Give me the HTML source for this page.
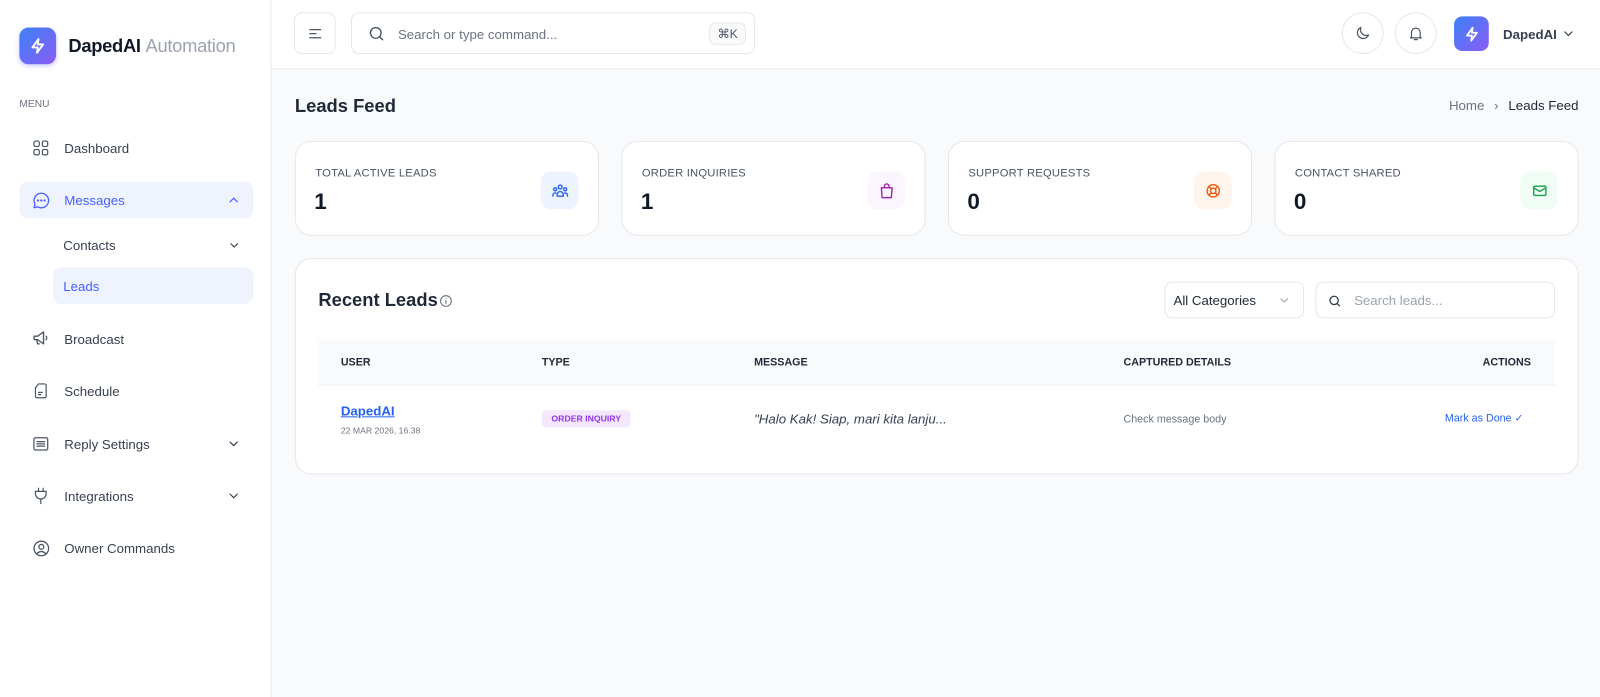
<!DOCTYPE html>
<html><head><meta charset="utf-8"><style>
*{box-sizing:border-box;margin:0;padding:0}
html,body{width:1600px;height:697px;overflow:hidden;background:#f9fafb}
body{font-family:"Liberation Sans",sans-serif;color:#1f2937;position:relative}
#w{position:absolute;left:0;top:0;width:1568px;height:683px;transform:scale(1.020408);transform-origin:0 0}
.a{position:absolute}
.side{left:0;top:0;width:266px;height:700px;background:#fff;border-right:1px solid #e5e7eb}
.hdr{left:266px;top:0;width:1334px;height:68px;background:#fff;border-bottom:1px solid #e5e7eb}
.nav{position:absolute;left:19px;width:229px;height:36px;border-radius:8px;display:flex;align-items:center;font-size:13px;color:#374151}
.nav svg.i{position:absolute;left:12px}
.nav span{position:absolute;left:44px}
.nav .ch{position:absolute;right:12px}
.card{position:absolute;top:138px;width:298px;height:93px;background:#fff;border:1px solid #e5e7eb;border-radius:16px}
.card .l{position:absolute;left:19px;top:25px;font-size:11px;color:#4b5563;letter-spacing:.2px}
.card .n{position:absolute;left:18px;top:46px;font-size:22px;font-weight:bold;color:#111827}
.card .ic{position:absolute;right:19px;top:29px;width:37px;height:37px;border-radius:10px;display:flex;align-items:center;justify-content:center}
svg{fill:none;stroke-linecap:round;stroke-linejoin:round}
.th{position:absolute;top:349px;font-size:10.5px;font-weight:bold;color:#1f2937}
</style></head><body><div id="w">
<div class="a side">
  <div class="a" style="left:19px;top:27px;width:36px;height:36px;border-radius:9px;background:linear-gradient(135deg,#3b82f6,#8b5cf6);box-shadow:0 2px 4px rgba(99,102,241,.3);display:flex;align-items:center;justify-content:center">
    <svg width="18" height="18" viewBox="0 0 24 24" stroke="#fff" stroke-width="2.5"><path d="M13 3L5 14h7l-1 7 8-11h-7z"/></svg></div>
  <div class="a" style="left:67px;top:35px;font-size:18px;font-weight:bold;color:#111827;letter-spacing:-.3px">DapedAI <span style="font-weight:normal;color:#9ca3af">Automation</span></div>
  <div class="a" style="left:19px;top:97px;font-size:10px;color:#6b7280">MENU</div>
  <div class="nav" style="top:127px"><svg class="i" width="18" height="18" viewBox="0 0 24 24" stroke="#4b5563" stroke-width="1.6"><rect x="3" y="3" width="7" height="7" rx="2"/><rect x="14" y="3" width="7" height="7" rx="2"/><rect x="3" y="14" width="7" height="7" rx="2"/><rect x="14" y="14" width="7" height="7" rx="2"/></svg><span>Dashboard</span></div>
  <div class="nav" style="top:178px;background:#eef3fd;color:#465fff"><svg class="i" width="19" height="19" viewBox="0 0 24 24" stroke="#465fff" stroke-width="1.6"><path d="M12 3a9 9 0 00-7.8 13.5L3 21l4.5-1.2A9 9 0 1012 3z"/><circle cx="8" cy="12" r=".6" fill="#465fff"/><circle cx="12" cy="12" r=".6" fill="#465fff"/><circle cx="16" cy="12" r=".6" fill="#465fff"/></svg><span>Messages</span><svg class="ch" width="14" height="14" viewBox="0 0 24 24" stroke="#465fff" stroke-width="2"><path d="M6 15l6-6 6 6"/></svg></div>
  <div class="nav" style="top:222px"><span style="left:43px">Contacts</span><svg class="ch" width="13" height="13" viewBox="0 0 24 24" stroke="#374151" stroke-width="2"><path d="M6 9l6 6 6-6"/></svg></div>
  <div class="nav" style="top:262px;left:52px;width:196px;background:#eef3fd;color:#465fff"><span style="left:10px">Leads</span></div>
  <div class="nav" style="top:314px"><svg class="i" width="20" height="20" viewBox="0 0 24 24" stroke="#4b5563" stroke-width="1.6"><path d="M3 9v4h4l7 5V4L7 9z"/><path d="M17 9a3 3 0 010 4"/><path d="M6 13l1 5h2"/></svg><span>Broadcast</span></div>
  <div class="nav" style="top:365px"><svg class="i" width="18" height="18" viewBox="0 0 24 24" stroke="#4b5563" stroke-width="1.6"><path d="M9 3h8a2 2 0 012 2v14a2 2 0 01-2 2H7a2 2 0 01-2-2V8z"/><path d="M9 14h5M9 17h3"/></svg><span>Schedule</span></div>
  <div class="nav" style="top:417px"><svg class="i" width="18" height="18" viewBox="0 0 24 24" stroke="#4b5563" stroke-width="1.6"><rect x="3" y="4" width="18" height="16" rx="2"/><path d="M7 9h10M7 12h10M7 15h10"/></svg><span>Reply Settings</span><svg class="ch" width="14" height="14" viewBox="0 0 24 24" stroke="#374151" stroke-width="2"><path d="M6 9l6 6 6-6"/></svg></div>
  <div class="nav" style="top:468px"><svg class="i" width="18" height="18" viewBox="0 0 24 24" stroke="#4b5563" stroke-width="1.6"><path d="M9 2v4M15 2v4M5 6h14v3a7 7 0 01-14 0z"/><path d="M12 16v6"/></svg><span>Integrations</span><svg class="ch" width="14" height="14" viewBox="0 0 24 24" stroke="#374151" stroke-width="2"><path d="M6 9l6 6 6-6"/></svg></div>
  <div class="nav" style="top:519px"><svg class="i" width="19" height="19" viewBox="0 0 24 24" stroke="#4b5563" stroke-width="1.6"><circle cx="12" cy="12" r="9"/><circle cx="12" cy="10" r="3"/><path d="M6.5 18.5a7 7 0 0111 0"/></svg><span>Owner Commands</span></div>
</div>
<div class="a hdr">
  <div class="a" style="left:22px;top:12px;width:41px;height:41px;border:1px solid #e5e7eb;border-radius:8px;display:flex;align-items:center;justify-content:center"><svg width="16" height="16" viewBox="0 0 24 24" stroke="#4b5563" stroke-width="1.8"><path d="M4 6h16M4 12h9M4 18h16"/></svg></div>
  <div class="a" style="left:78px;top:12px;width:396px;height:41px;border:1px solid #e5e7eb;border-radius:8px">
    <svg class="a" style="left:15px;top:11px" width="18" height="18" viewBox="0 0 24 24" stroke="#4b5563" stroke-width="1.8"><circle cx="11" cy="11" r="7"/><path d="M20 20l-4-4"/></svg>
    <div class="a" style="left:45px;top:13px;font-size:13px;color:#6b7280">Search or type command...</div>
    <div class="a" style="right:8px;top:9px;width:36px;height:22px;border:1px solid #e5e7eb;background:#f9fafb;border-radius:6px;font-size:12px;color:#4b5563;text-align:center;line-height:20px">⌘K</div>
  </div>
  <div class="a" style="left:1049px;top:12px;width:41px;height:41px;border:1px solid #e5e7eb;border-radius:50%;display:flex;align-items:center;justify-content:center"><svg width="17" height="17" viewBox="0 0 24 24" stroke="#4b5563" stroke-width="1.7"><path d="M20 14.5A8 8 0 019.5 4a8 8 0 1010.5 10.5z"/></svg></div>
  <div class="a" style="left:1101px;top:12px;width:41px;height:41px;border:1px solid #e5e7eb;border-radius:50%;display:flex;align-items:center;justify-content:center"><svg width="17" height="17" viewBox="0 0 24 24" stroke="#4b5563" stroke-width="1.7"><path d="M6 17V11a6 6 0 0112 0v6l1.5 1.5h-15zM10 21h4"/></svg></div>
  <div class="a" style="left:1159px;top:16px;width:34px;height:34px;border-radius:8px;background:linear-gradient(135deg,#3b82f6,#8b5cf6);display:flex;align-items:center;justify-content:center"><svg width="17" height="17" viewBox="0 0 24 24" stroke="#fff" stroke-width="2.5"><path d="M13 3L5 14h7l-1 7 8-11h-7z"/></svg></div>
  <div class="a" style="left:1207px;top:26px;font-size:13px;font-weight:bold;color:#374151">DapedAI</div>
  <svg class="a" style="left:1264px;top:26px" width="14" height="14" viewBox="0 0 24 24" stroke="#374151" stroke-width="2"><path d="M6 9l6 6 6-6"/></svg>
</div>
<div class="a" style="left:289px;top:94px;font-size:18px;font-weight:bold;color:#1f2937">Leads Feed</div>
<div class="a" style="left:1420px;top:96px;font-size:13px;color:#6b7280">Home <span style="margin:0 6px">›</span> <span style="color:#1f2937">Leads Feed</span></div>

<div class="card" style="left:289px"><div class="l">TOTAL ACTIVE LEADS</div><div class="n">1</div><div class="ic" style="background:#eef4ff"><svg width="18" height="18" viewBox="0 0 24 24" stroke="#2563eb" stroke-width="1.8"><circle cx="12" cy="7" r="2.5"/><circle cx="5.5" cy="10" r="2"/><circle cx="18.5" cy="10" r="2"/><path d="M8 19v-2a4 4 0 018 0v2zM2.5 19v-1.5a3 3 0 014-2.5M21.5 19v-1.5a3 3 0 00-4-2.5"/></svg></div></div>
<div class="card" style="left:609px"><div class="l">ORDER INQUIRIES</div><div class="n">1</div><div class="ic" style="background:#faf5ff"><svg width="18" height="18" viewBox="0 0 24 24" stroke="#a21caf" stroke-width="1.8"><path d="M5 8h14l-1 13H6z"/><path d="M9 8V6a3 3 0 016 0v2"/></svg></div></div>
<div class="card" style="left:929px"><div class="l">SUPPORT REQUESTS</div><div class="n">0</div><div class="ic" style="background:#fff5ed"><svg width="18" height="18" viewBox="0 0 24 24" stroke="#ea580c" stroke-width="1.8"><circle cx="12" cy="12" r="8"/><circle cx="12" cy="12" r="3.5"/><path d="M6.5 6.5l3 3M17.5 6.5l-3 3M6.5 17.5l3-3M17.5 17.5l-3-3"/></svg></div></div>
<div class="card" style="left:1249px"><div class="l">CONTACT SHARED</div><div class="n">0</div><div class="ic" style="background:#effdf4"><svg width="18" height="18" viewBox="0 0 24 24" stroke="#16a34a" stroke-width="1.8"><rect x="4" y="6" width="16" height="12" rx="1.5"/><path d="M4 8l8 5 8-5"/></svg></div></div>

<div class="a" style="left:289px;top:253px;width:1258px;height:212px;background:#fff;border:1px solid #e5e7eb;border-radius:16px"></div>
<div class="a" style="left:312px;top:284px;font-size:18px;font-weight:bold;color:#1f2937">Recent Leads</div>
<svg class="a" style="left:430px;top:288px" width="14" height="14" viewBox="0 0 24 24" stroke="#6b7280" stroke-width="1.8"><circle cx="12" cy="12" r="9"/><path d="M12 11v5M12 8v.01"/></svg>
<div class="a" style="left:1141px;top:276px;width:137px;height:36px;border:1px solid #e5e7eb;border-radius:8px"><div class="a" style="left:8px;top:10px;font-size:13px;color:#1f2937">All Categories</div><svg class="a" style="right:12px;top:11px" width="13" height="13" viewBox="0 0 24 24" stroke="#9ca3af" stroke-width="2"><path d="M6 9l6 6 6-6"/></svg></div>
<div class="a" style="left:1289px;top:276px;width:235px;height:36px;border:1px solid #e5e7eb;border-radius:8px"><svg class="a" style="left:11px;top:11px" width="14" height="14" viewBox="0 0 24 24" stroke="#374151" stroke-width="2.2"><circle cx="11" cy="11" r="7"/><path d="M20 20l-4-4"/></svg><div class="a" style="left:37px;top:10px;font-size:13px;color:#9ca3af">Search leads...</div></div>
<div class="a" style="left:312px;top:333px;width:1212px;height:45px;background:#f9fafb;border-bottom:1px solid #f0f1f3"></div>
<div class="th" style="left:334px">USER</div>
<div class="th" style="left:531px">TYPE</div>
<div class="th" style="left:739px">MESSAGE</div>
<div class="th" style="left:1101px">CAPTURED DETAILS</div>
<div class="th" style="left:1453px">ACTIONS</div>
<div class="a" style="left:334px;top:395px;font-size:13px;font-weight:bold;color:#2563eb;text-decoration:underline">DapedAI</div>
<div class="a" style="left:334px;top:417px;font-size:8.5px;color:#6b7280">22 MAR 2026, 16.38</div>
<div class="a" style="left:531px;top:402px;width:87px;height:17px;border-radius:4px;background:#f5e8fd;color:#9333ea;font-size:8.5px;font-weight:bold;text-align:center;line-height:17px">ORDER INQUIRY</div>
<div class="a" style="left:739px;top:403px;font-size:13px;font-style:italic;color:#374151">"Halo Kak! Siap, mari kita lanju...</div>
<div class="a" style="left:1101px;top:405px;font-size:10.5px;color:#6b7280">Check message body</div>
<div class="a" style="left:1416px;top:404px;font-size:10.5px;color:#2563eb">Mark as Done ✓</div>
</div></body></html>
